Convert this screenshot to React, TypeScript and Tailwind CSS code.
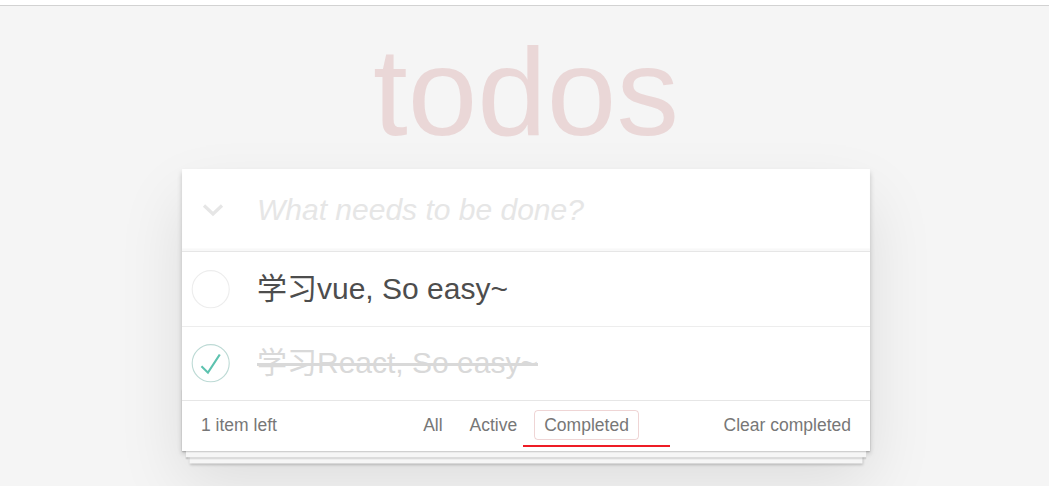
import React from "react";

type Todo = { title: string; done: boolean };

const todos: Todo[] = [
  { title: "学习vue, So easy~", done: false },
  { title: "学习React, So easy~", done: true },
];

const filters = ["All", "Active", "Completed"];

// round toggle, same drawing as the classic todomvc checkbox
const Toggle = ({ done }: { done: boolean }) => (
  <svg width="50" height="50" viewBox="-10 -18 100 135" className="shrink-0">
    <circle
      cx="50"
      cy="50"
      r="50"
      fill="none"
      stroke={done ? "#bddad5" : "#ededed"}
      strokeWidth="3"
    />
    {done && <path fill="#5dc2af" d="M72 25L42 71 27 56l-4 4 20 20 34-52z" />}
  </svg>
);

const App: React.FC = () => {
  const left = todos.filter((t) => !t.done).length;

  return (
    <div className="min-h-screen bg-[#f5f5f5] text-[#4d4d4d] font-['Liberation_Sans','Noto_Sans_CJK_SC',sans-serif] overflow-hidden">
      <div className="h-[6px] bg-white border-b border-[#d2d2d2]" />

      {/* Title */}
      <h1 className="mt-[23px] mb-[15px] pl-[3px] h-[125px] text-center text-[125px] leading-[125px] font-normal text-[rgba(175,47,47,0.15)]">
        todos
      </h1>

      <div className="pl-[3px]">
        <section className="relative mx-auto w-[688px] bg-white shadow-[0_2.5px_5px_0_rgba(0,0,0,0.2),0_31px_62px_0_rgba(0,0,0,0.1)]">
          {/* Header */}
          <header className="flex items-center h-[82px] shadow-[inset_0_-2.5px_1.25px_rgba(0,0,0,0.03)]">
            <div className="w-[75px] pl-[20px] shrink-0 flex">
              <svg width="22" height="14" viewBox="0 0 22 14">
                <path
                  d="M2 2.5 L11 11 L20 2.5"
                  fill="none"
                  stroke="#e6e6e6"
                  strokeWidth="3.2"
                />
              </svg>
            </div>
            <input
              className="flex-1 min-w-0 pr-[20px] text-[30px] leading-[42px] outline-none bg-transparent placeholder:italic placeholder:text-[#e6e6e6]"
              placeholder="What needs to be done?"
            />
          </header>

          {/* List */}
          <ul className="border-t border-[#e6e6e6]">
            {todos.map((todo, i) => (
              <li
                key={i}
                className={`flex items-center ${
                  i < todos.length - 1 ? "border-b border-[#ededed]" : ""
                }`}
              >
                <Toggle done={todo.done} />
                <label
                  className={`block pl-[25px] pr-[19px] py-[18.75px] text-[30px] leading-[36px] ${
                    todo.done ? "text-[#d9d9d9] line-through" : "text-[#4d4d4d]"
                  }`}
                >
                  {todo.title}
                </label>
              </li>
            ))}
          </ul>

          {/* Footer */}
          <footer className="relative h-[51px] border-t border-[#e6e6e6] px-[19px] pb-[2px] grid grid-cols-[1fr_auto_1fr] items-center text-[17.5px] text-[#777]">
            <div
              aria-hidden
              className="absolute left-0 right-0 bottom-0 h-[62px] overflow-hidden pointer-events-none shadow-[0_1.25px_1.25px_rgba(0,0,0,0.2),0_10px_0_-3.75px_#f6f6f6,0_11.25px_1.25px_-3.75px_rgba(0,0,0,0.2),0_20px_0_-7.5px_#f6f6f6,0_21.25px_2.5px_-7.5px_rgba(0,0,0,0.2)]"
            />
            <span className="relative">
              {left} item left
            </span>
            <ul className="relative flex">
              {filters.map((f) => (
                <li key={f}>
                  <a
                    className={`block m-[3.75px] px-[8.75px] py-[3.75px] leading-[20px] rounded-[3.75px] border ${
                      f === "Completed"
                        ? "border-[rgba(175,47,47,0.2)]"
                        : "border-transparent"
                    }`}
                  >
                    {f}
                  </a>
                </li>
              ))}
            </ul>
            <span className="relative justify-self-end">Clear completed</span>
            <div className="absolute left-[341px] top-[44px] w-[147px] h-[2px] bg-[#ee1c25]" />
          </footer>
        </section>
      </div>
    </div>
  );
};

export default App;
